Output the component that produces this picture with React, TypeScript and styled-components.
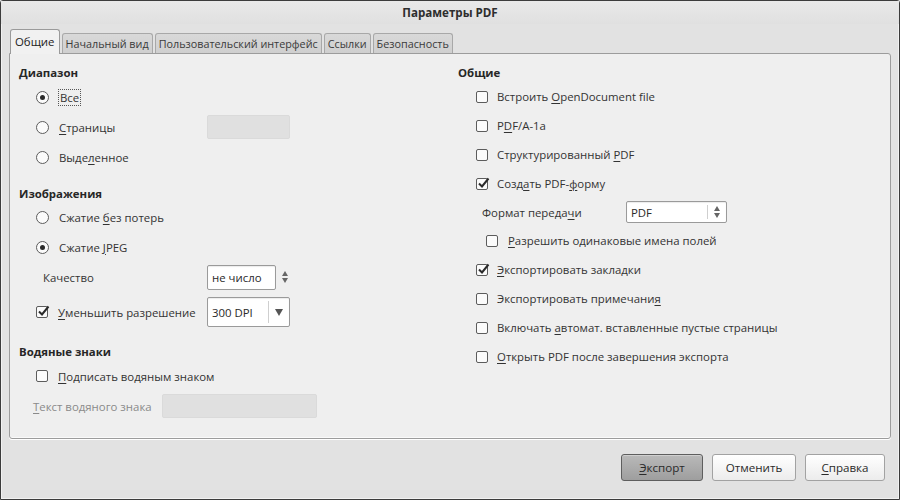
import React from "react";
import styled, { createGlobalStyle, css } from "styled-components";

const GlobalStyle = createGlobalStyle`
  html, body {
    margin: 0;
    padding: 0;
    background: #dcdcdc;
  }
  body {
    font-family: "Open Sans", "Noto Sans", "DejaVu Sans", sans-serif;
    font-size: 11.4px;
    color: #333;
  }
  u {
    text-decoration-thickness: 1px;
    text-underline-offset: 2px;
  }
`;

const Window = styled.div`
  width: 900px;
  height: 500px;
  box-sizing: border-box;
  border: 1px solid #3c3c3c;
  border-radius: 3px 3px 0 0;
  background: #e2e2e2;
  display: flex;
  flex-direction: column;
  box-shadow: inset 0 0 0 1px #f2f2f2;
`;

const TitleBar = styled.div`
  height: 23px;
  display: flex;
  align-items: center;
  justify-content: center;
  font-weight: bold;
  font-size: 11.6px;
  color: #2e2e2e;
  background: linear-gradient(#e9e9e9, #e0e0e0);
`;

const TabBar = styled.div`
  display: flex;
  align-items: flex-end;
  height: 29px;
  padding-left: 9px;
  position: relative;
  z-index: 1;
`;

const Tab = styled.div<{ $active?: boolean }>`
  box-sizing: border-box;
  padding: 0 3px;
  margin-right: 2px;
  border: 1px solid #a8a8a8;
  border-bottom: none;
  border-radius: 3px 3px 0 0;
  display: flex;
  align-items: center;
  font-size: 10.8px;
  color: #3a3a3a;
  white-space: nowrap;
  ${(p) =>
    p.$active
      ? css`
          background: #f1f1f1;
          border-color: #9a9a9a;
          margin-bottom: -1px;
          height: 25px;
          padding: 0 4px 1px;
          font-size: 11.4px;
          color: #222;
        `
      : css`
          height: 20px;
          background: linear-gradient(#d9d9d9, #cfcfcf);
        `}
`;

const Panel = styled.div`
  margin: 0 8px 0 8px;
  height: 386px;
  box-sizing: border-box;
  border: 1px solid #9c9c9c;
  border-radius: 0 3px 3px 3px;
  background: #efefef;
  box-shadow: 0 1px 0 #ffffff, inset 0 -1px 0 #fafafa;
  display: grid;
  grid-template-columns: 439px 1fr;
  padding: 8px 0 0 9px;
`;

const Column = styled.div`
  display: flex;
  flex-direction: column;
`;

const Heading = styled.div<{ $top?: number }>`
  height: 20px;
  display: flex;
  align-items: center;
  font-weight: bold;
  color: #262626;
  margin-top: ${(p) => p.$top ?? 0}px;
`;

const Row = styled.div<{ $h?: number; $indent: number; $top?: number; $field?: number }>`
  height: ${(p) => p.$h ?? 30}px;
  margin-top: ${(p) => p.$top ?? 0}px;
  padding-left: ${(p) => p.$indent}px;
  display: grid;
  grid-template-columns: ${(p) => (p.$field ? `${p.$field}px auto` : "auto")};
  justify-content: start;
  align-items: center;
`;

const Option = styled.label<{ $gap?: number }>`
  display: flex;
  align-items: center;
  gap: ${(p) => p.$gap ?? 10}px;
  white-space: nowrap;
`;

const Label = styled.span<{ $muted?: boolean }>`
  color: ${(p) => (p.$muted ? "#8a8a8a" : "#333")};
  white-space: nowrap;
`;

const Focused = styled.span`
  outline: 1px dotted #555;
  outline-offset: 0px;
  padding: 0 1px;
`;

const Radio = styled.span<{ $on?: boolean }>`
  width: 13px;
  height: 13px;
  box-sizing: border-box;
  border: 1px solid #5c5c5c;
  border-radius: 50%;
  background: #fbfbfb;
  display: flex;
  align-items: center;
  justify-content: center;
  &::after {
    content: "";
    width: 5px;
    height: 5px;
    border-radius: 50%;
    background: #2a2a2a;
    display: ${(p) => (p.$on ? "block" : "none")};
  }
`;

const Box = styled.span`
  width: 12px;
  height: 12px;
  box-sizing: border-box;
  border: 1px solid #5c5c5c;
  border-radius: 2px;
  background: #fbfbfb;
  position: relative;
  svg {
    position: absolute;
    left: -1px;
    top: -3px;
  }
`;

const Check = ({ on }: { on?: boolean }) => (
  <Box>
    {on && (
      <svg width="14" height="14" viewBox="0 0 14 14">
        <path d="M3 7.5 L6 10.5 L12.5 2.5" fill="none" stroke="#2a2a2a" strokeWidth="2" />
      </svg>
    )}
  </Box>
);

const Disabled = styled.div<{ $w: number }>`
  width: ${(p) => p.$w}px;
  height: 24px;
  box-sizing: border-box;
  background: #e0e0e0;
  border: 1px solid #dadada;
  border-radius: 2px;
`;

const Spin = styled.div`
  display: flex;
  align-items: center;
  gap: 5px;
`;

const Field = styled.div<{ $w: number; $h?: number }>`
  width: ${(p) => p.$w}px;
  height: ${(p) => p.$h ?? 25}px;
  box-sizing: border-box;
  background: #fff;
  border: 1px solid #9a9a9a;
  border-radius: 2px;
  display: flex;
  align-items: center;
  color: #2a2a2a;
  box-shadow: inset 0 1px 1px rgba(0, 0, 0, 0.08);
`;

const FieldText = styled.span`
  flex: 1;
  padding-left: 4px;
`;

const Divider = styled.span`
  align-self: stretch;
  width: 1px;
  background: #cfcfcf;
  margin: 3px 0;
`;

const Arrows = styled.span<{ $w: number }>`
  width: ${(p) => p.$w}px;
  display: flex;
  justify-content: center;
`;

const SpinArrows = () => (
  <svg width="8" height="14" viewBox="0 0 8 14">
    <path d="M4 1 L7 6 L1 6 Z" fill="#666" />
    <path d="M4 13 L7 8 L1 8 Z" fill="#666" />
  </svg>
);

const DownArrow = () => (
  <svg width="10" height="10" viewBox="0 0 10 10">
    <path d="M1 2 L9 2 L5 9 Z" fill="#555" />
  </svg>
);

const Footer = styled.div`
  flex: 1;
  display: flex;
  justify-content: flex-end;
  align-items: center;
  gap: 9px;
  padding: 0 14px 4px 0;
`;

const Button = styled.button<{ $primary?: boolean; $w: number }>`
  width: ${(p) => p.$w}px;
  height: 27px;
  font-family: inherit;
  font-size: 11.6px;
  color: #2a2a2a;
  border-radius: 3px;
  border: 1px solid ${(p) => (p.$primary ? "#5e5e5e" : "#a2a2a2")};
  background: ${(p) =>
    p.$primary
      ? "linear-gradient(#b9b9b9, #9e9e9e)"
      : "linear-gradient(#ffffff, #ececec)"};
  box-shadow: ${(p) => (p.$primary ? "inset 0 1px 0 #cfcfcf" : "inset 0 1px 0 #fff")};
  padding: 0;
`;

export default function App() {
  return (
    <>
      <GlobalStyle />
      <Window>
        <TitleBar>Параметры PDF</TitleBar>
        <TabBar>
          <Tab $active>Общие</Tab>
          <Tab>Начальный вид</Tab>
          <Tab>Пользовательский интерфейс</Tab>
          <Tab>Ссылки</Tab>
          <Tab>Безопасность</Tab>
        </TabBar>
        <Panel>
          <Column>
            <Heading>Диапазон</Heading>
            <Row $indent={17}>
              <Option>
                <Radio $on />
                <Focused>Все</Focused>
              </Option>
            </Row>
            <Row $indent={17} $field={171}>
              <Option>
                <Radio />
                <Label>
                  <u>С</u>траницы
                </Label>
              </Option>
              <Disabled $w={83} />
            </Row>
            <Row $indent={17}>
              <Option>
                <Radio />
                <Label>
                  Выде<u>л</u>енное
                </Label>
              </Option>
            </Row>
            <Heading $top={11}>Изображения</Heading>
            <Row $indent={17} $h={29}>
              <Option>
                <Radio />
                <Label>
                  Сжатие <u>б</u>ез потерь
                </Label>
              </Option>
            </Row>
            <Row $indent={17}>
              <Option>
                <Radio $on />
                <Label>
                  Сжатие <u>J</u>PEG
                </Label>
              </Option>
            </Row>
            <Row $indent={24} $field={164}>
              <Label>Качество</Label>
              <Spin>
                <Field $w={69}>
                  <FieldText>не число</FieldText>
                </Field>
                <SpinArrows />
              </Spin>
            </Row>
            <Row $indent={17} $field={171} $h={30} $top={5}>
              <Option>
                <Check on />
                <Label>
                  <u>У</u>меньшить разрешение
                </Label>
              </Option>
              <Field $w={83} $h={30}>
                <FieldText>300 DPI</FieldText>
                <Divider />
                <Arrows $w={20}>
                  <DownArrow />
                </Arrows>
              </Field>
            </Row>
            <Heading $top={14}>Водяные знаки</Heading>
            <Row $indent={17}>
              <Option>
                <Check />
                <Label>
                  <u>П</u>одписать водяным знаком
                </Label>
              </Option>
            </Row>
            <Row $indent={14} $field={129}>
              <Label $muted>
                <u>Т</u>екст водяного знака
              </Label>
              <Disabled $w={155} />
            </Row>
          </Column>
          <Column>
            <Heading>Общие</Heading>
            <Row $indent={18} $h={29}>
              <Option $gap={9}>
                <Check />
                <Label>
                  Встроить <u>O</u>penDocument file
                </Label>
              </Option>
            </Row>
            <Row $indent={18} $h={29}>
              <Option $gap={9}>
                <Check />
                <Label>
                  P<u>D</u>F/A-1a
                </Label>
              </Option>
            </Row>
            <Row $indent={18} $h={29}>
              <Option $gap={9}>
                <Check />
                <Label>
                  Структурированный <u>P</u>DF
                </Label>
              </Option>
            </Row>
            <Row $indent={18} $h={29}>
              <Option $gap={9}>
                <Check on />
                <Label>
                  Созд<u>а</u>ть PDF-<u>ф</u>орму
                </Label>
              </Option>
            </Row>
            <Row $indent={24} $h={28} $field={144}>
              <Label>
                Формат переда<u>ч</u>и
              </Label>
              <Field $w={101} $h={22}>
                <FieldText>PDF</FieldText>
                <Divider />
                <Arrows $w={18}>
                  <SpinArrows />
                </Arrows>
              </Field>
            </Row>
            <Row $indent={28} $h={29}>
              <Option>
                <Check />
                <Label>
                  <u>Р</u>азрешить одинаковые имена полей
                </Label>
              </Option>
            </Row>
            <Row $indent={18} $h={29}>
              <Option $gap={9}>
                <Check on />
                <Label>
                  <u>Э</u>кспортировать закладки
                </Label>
              </Option>
            </Row>
            <Row $indent={18} $h={29}>
              <Option $gap={9}>
                <Check />
                <Label>
                  Экспортировать примечани<u>я</u>
                </Label>
              </Option>
            </Row>
            <Row $indent={18} $h={29}>
              <Option $gap={9}>
                <Check />
                <Label>
                  Включать <u>а</u>втомат. вставленные пустые страницы
                </Label>
              </Option>
            </Row>
            <Row $indent={18} $h={29}>
              <Option $gap={9}>
                <Check />
                <Label>
                  <u>О</u>ткрыть PDF после завершения экспорта
                </Label>
              </Option>
            </Row>
          </Column>
        </Panel>
        <Footer>
          <Button $primary $w={82}>
            <u>Э</u>кспорт
          </Button>
          <Button $w={84}>Отменить</Button>
          <Button $w={80}>
            <u>С</u>правка
          </Button>
        </Footer>
      </Window>
    </>
  );
}
